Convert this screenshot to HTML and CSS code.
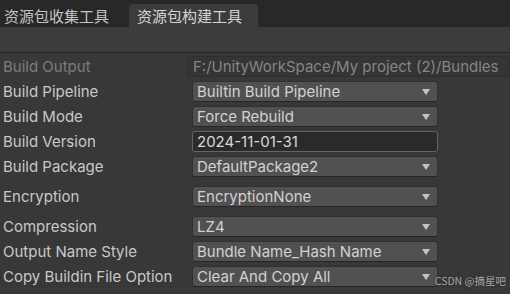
FILE: index.html
```html
<!DOCTYPE html>
<html lang="zh-CN">
<head>
    <meta charset="UTF-8">
    <title>资源包构建工具</title>
    <link rel="stylesheet" href="styles.css">
</head>
<body>
    <div class="tab-bar">
        <div class="tab">资源包收集工具</div>
        <div class="tab active">资源包构建工具</div>
    </div>
    <div class="toolbar"></div>

    <div class="inspector">
        <div class="row">
            <span class="label disabled">Build Output</span>
            <div class="field readonly">F:/UnityWorkSpace/My project (2)/Bundles</div>
        </div>
        <div class="row">
            <span class="label">Build Pipeline</span>
            <div class="field dropdown">Builtin Build Pipeline<span class="arrow"></span></div>
        </div>
        <div class="row">
            <span class="label">Build Mode</span>
            <div class="field dropdown">Force Rebuild<span class="arrow"></span></div>
        </div>
        <div class="row">
            <span class="label">Build Version</span>
            <div class="field text-input">2024-11-01-31</div>
        </div>
        <div class="row">
            <span class="label">Build Package</span>
            <div class="field dropdown">DefaultPackage2<span class="arrow"></span></div>
        </div>
        <div class="row spaced">
            <span class="label">Encryption</span>
            <div class="field dropdown">EncryptionNone<span class="arrow"></span></div>
        </div>
        <div class="row spaced">
            <span class="label">Compression</span>
            <div class="field dropdown">LZ4<span class="arrow"></span></div>
        </div>
        <div class="row">
            <span class="label">Output Name Style</span>
            <div class="field dropdown">Bundle Name_Hash Name<span class="arrow"></span></div>
        </div>
        <div class="row">
            <span class="label">Copy Buildin File Option</span>
            <div class="field dropdown">Clear And Copy All<span class="arrow"></span></div>
        </div>
    </div>

    <div class="watermark">CSDN @摘星吧</div>
</body>
</html>
```

FILE: styles.css
```css
body {
    margin: 0;
    width: 510px;
    height: 294px;
    overflow: hidden;
    background: #383838;
    font-family: Inter, "Noto Sans CJK SC", sans-serif;
    color: #c8c8c8;
    position: relative;
}

.tab-bar {
    height: 27px;
    background: #282828;
    display: flex;
    align-items: flex-end;
}

.tab {
    font-family: "Noto Sans CJK SC", sans-serif;
    font-size: 15px;
    line-height: 23px;
    height: 23px;
    padding: 0 8px 0 4px;
    width: 117px;
    color: #c4c4c4;
}

.tab.active {
    background: #3c3c3c;
    border-radius: 4px 4px 0 0;
    padding: 0 8px;
    width: 113px;
    color: #d4d4d4;
}

.toolbar {
    height: 25px;
    background: #3c3c3c;
    border-bottom: 1px solid #232323;
}

.inspector {
    padding-top: 3px;
}

.row {
    display: flex;
    align-items: center;
    height: 21px;
    margin-bottom: 4px;
}

/* collapses with the 4px below the previous row */
.row.spaced {
    margin-top: 9px;
}

.label {
    width: 189px;
    padding-left: 3px;
    box-sizing: border-box;
    font-size: 15px;
    color: #c8c8c8;
    white-space: nowrap;
}

.label.disabled {
    color: #7c7c7c;
}

.field {
    position: relative;
    box-sizing: border-box;
    height: 21px;
    width: 246px;
    margin-left: 3px;
    padding-left: 4px;
    font-size: 15px;
    line-height: 19px;
    border: 1px solid #303030;
    border-radius: 3px;
    white-space: nowrap;
}

.field.readonly {
    width: 330px;
    margin-left: 2px;
    padding-left: 5px;
    background: #353535;
    border-color: #2e2e2e;
    color: #858585;
}

.field.dropdown {
    background: #515151;
    border-color: #303030;
    border-bottom-color: #262626;
    color: #d2d2d2;
}

.field.text-input {
    background: #2a2a2a;
    border-color: #656565;
    color: #d8d8d8;
}

.arrow {
    position: absolute;
    right: 7px;
    top: 7px;
    width: 0;
    height: 0;
    border-left: 4.5px solid transparent;
    border-right: 4.5px solid transparent;
    border-top: 6px solid #c4c4c4;
}

.watermark {
    position: absolute;
    right: 4px;
    top: 274px;
    font-family: "Noto Sans CJK SC", sans-serif;
    font-size: 10.5px;
    line-height: 14px;
    color: #a8a8a8;
    text-shadow: 0 0 2px #2a2a2a;
}
```
